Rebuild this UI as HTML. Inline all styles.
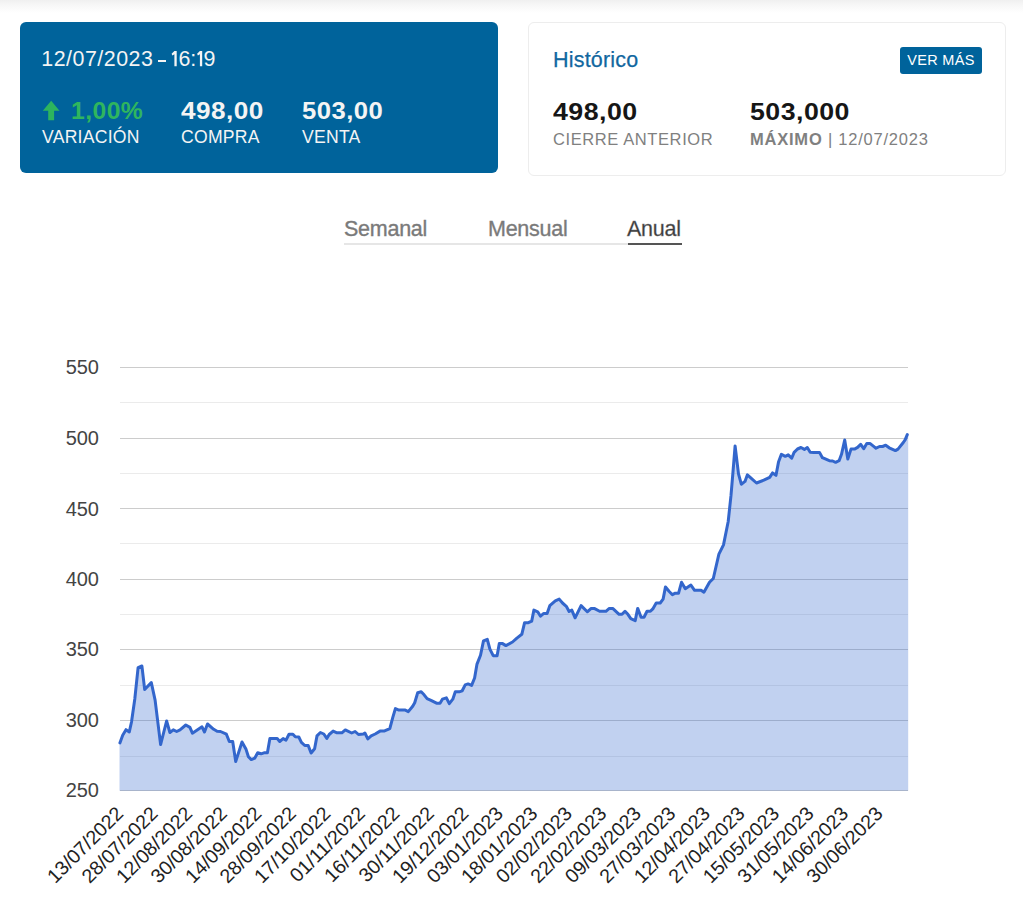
<!DOCTYPE html>
<html>
<head>
<meta charset="utf-8">
<style>
html, body { margin:0; padding:0; }
body { width:1023px; height:910px; position:relative; overflow:hidden; background:#ffffff; font-family:"Liberation Sans", sans-serif; }
.topshade { position:absolute; left:0; top:0; width:1023px; height:13px; background:linear-gradient(#f0f0f0, #f8f8f8 45%, #ffffff); }
.abs { position:absolute; white-space:nowrap; line-height:1; }
.card1 { position:absolute; left:20px; top:22px; width:478px; height:151px; background:#00639b; border-radius:6px; }
.card2 { position:absolute; box-sizing:border-box; left:528px; top:22px; width:478px; height:154px; border:1.5px solid #ededed; border-radius:6px; background:#fff; }
.w { color:#f4f4f4; }
.date { left:41.3px; top:49px; font-size:21.4px; letter-spacing:0.5px; }
.big { font-weight:bold; font-size:23px; letter-spacing:0.4px; transform-origin:0 0; }
.lbl { font-size:17.6px; letter-spacing:0.25px; }
.green { color:#2fb55e; }
.hist { left:553px; top:50px; font-size:21.5px; color:#11679f; letter-spacing:0.2px; -webkit-text-stroke:0.25px #11679f; }
.btn { position:absolute; left:900px; top:47px; width:82px; height:27px; background:#00639b; border-radius:3px; color:#fff; font-size:14.5px; letter-spacing:0.3px; line-height:26px; text-align:center; line-height:27px; }
.dark { color:#161616; }
.grey { color:#808080; font-size:16.5px; letter-spacing:0.6px; }
.tab { font-size:21.5px; color:#7a7a7a; top:219px; letter-spacing:-0.25px; -webkit-text-stroke:0.35px #7a7a7a; }
svg { position:absolute; left:0; top:0; }
</style>
</head>
<body>
<div class="topshade"></div>
<div class="card1"></div>
<div class="card2"></div>
<div class="abs w date">12/07/2023</div><div class="abs" style="left:158px; top:59.6px; width:7.5px; height:2.2px; background:#f4f4f4;"></div><svg width="1023" height="910" style="z-index:2"><path d="M174.4,51 L176.7,51 L176.7,66.2 L174.4,66.2 L174.4,54.2 L172.4,55.6 L171.6,53.8 Z" fill="#f4f4f4"/><path d="M199.9,51 L202.2,51 L202.2,66.2 L199.9,66.2 L199.9,54.2 L197.9,55.6 L197.1,53.8 Z" fill="#f4f4f4"/></svg><div class="abs w date" style="left:178.6px; letter-spacing:0;">6</div><div class="abs w date" style="left:190.3px; letter-spacing:0;">:</div><div class="abs w date" style="left:203.6px; letter-spacing:0;">9</div>
<svg width="1023" height="910" style="z-index:2">
<path d="M51.15,100.8 L59.5,110.8 L54.1,110.8 L54.1,120.2 L48.2,120.2 L48.2,110.8 L42.8,110.8 Z" fill="#2db45e"/>
</svg>
<div class="abs big green" style="left:71.4px; top:100px; z-index:3; transform:scaleX(1.075);">1,00%</div>
<div class="abs w lbl" style="left:42px; top:129px;">VARIACIÓN</div>
<div class="abs w big" style="left:181.2px; top:100px; transform:scaleX(1.136);">498,00</div>
<div class="abs w lbl" style="left:181px; top:129px;">COMPRA</div>
<div class="abs w big" style="left:302px; top:100px; transform:scaleX(1.115);">503,00</div>
<div class="abs w lbl" style="left:302px; top:129px;">VENTA</div>

<div class="abs hist">Histórico</div>
<div class="btn">VER MÁS</div>
<div class="abs big dark" style="left:552.5px; top:101px; transform:scaleX(1.164);">498,00</div>
<div class="abs grey" style="left:553px; top:131px;">CIERRE ANTERIOR</div>
<div class="abs big dark" style="left:750px; top:101px; transform:scaleX(1.162);">503,000</div>
<div class="abs grey" style="left:750px; top:131px; letter-spacing:0.78px;"><b style="font-weight:bold">MÁXIMO</b> | 12/07/2023</div>

<div class="abs tab" style="left:344px;">Semanal</div>
<div class="abs tab" style="left:488px;">Mensual</div>
<div class="abs tab" style="left:627px; color:#3a3a3a;">Anual</div>
<div class="abs" style="left:344px; top:243px; width:284px; height:2px; background:#e6e6e6;"></div>
<div class="abs" style="left:628px; top:243px; width:54px; height:2px; background:#555555;"></div>

<svg width="1023" height="910" style="z-index:1">
<g shape-rendering="crispEdges">
<line x1="119.5" y1="367.5" x2="908.2" y2="367.5" stroke="#cccccc" stroke-width="1"/>
<line x1="119.5" y1="438.3" x2="908.2" y2="438.3" stroke="#cccccc" stroke-width="1"/>
<line x1="119.5" y1="508.9" x2="908.2" y2="508.9" stroke="#cccccc" stroke-width="1"/>
<line x1="119.5" y1="579.6" x2="908.2" y2="579.6" stroke="#cccccc" stroke-width="1"/>
<line x1="119.5" y1="649.3" x2="908.2" y2="649.3" stroke="#cccccc" stroke-width="1"/>
<line x1="119.5" y1="720.2" x2="908.2" y2="720.2" stroke="#cccccc" stroke-width="1"/>
<line x1="119.5" y1="790.8" x2="908.2" y2="790.8" stroke="#cccccc" stroke-width="1"/>
<line x1="119.5" y1="402.3" x2="908.2" y2="402.3" stroke="#ebebeb" stroke-width="1"/>
<line x1="119.5" y1="473.1" x2="908.2" y2="473.1" stroke="#ebebeb" stroke-width="1"/>
<line x1="119.5" y1="543.9" x2="908.2" y2="543.9" stroke="#ebebeb" stroke-width="1"/>
<line x1="119.5" y1="614.4" x2="908.2" y2="614.4" stroke="#ebebeb" stroke-width="1"/>
<line x1="119.5" y1="685.3" x2="908.2" y2="685.3" stroke="#ebebeb" stroke-width="1"/>
<line x1="119.5" y1="756.4" x2="908.2" y2="756.4" stroke="#ebebeb" stroke-width="1"/>
</g>
<path d="M119.5,790.8 L119.5,742.9 L119.9,742.9 L122.7,735.2 L126,729.7 L129.3,731.9 L131.5,722 L134.8,699 L138.1,667.6 L141.9,666 L144.7,689.6 L151.3,682.5 L155.1,700.1 L160.6,744.6 L166.6,721 L169.9,732.5 L173.3,729.8 L176.7,731.5 L180,729.9 L185.8,725 L189.9,727.4 L192.4,733.2 L199.8,728.3 L202,726.8 L204.5,732 L207.5,724 L213.7,729.3 L217.1,731.3 L220.5,731.5 L226.4,734.2 L229.3,741.5 L232.7,741.5 L235.7,761.6 L242,742 L245.9,748.9 L248.4,756.7 L251.3,759.6 L254.7,758.2 L257.7,752.8 L261.1,753.8 L264,752.8 L267.4,752.8 L269.9,738.6 L277.2,738.6 L279.7,741.5 L283.1,738.6 L286,740.1 L289,734.2 L292.9,734.2 L295.3,736.7 L298.8,737 L301.4,742.3 L304.8,745.5 L308.2,745.5 L311.1,753 L314.6,748.7 L317,735.9 L320.4,732.5 L323.8,734 L326.8,738.4 L329.2,734.5 L333.1,731.1 L337,732.8 L341.9,732.8 L345.3,729.9 L351.7,733 L355.1,731.5 L358.5,734.5 L363.4,734 L364.9,733 L367.8,738.9 L371.2,735.9 L375.2,734 L380,731.1 L384,731.1 L389.8,728.6 L392.8,717.4 L395.4,708.6 L398.9,710.1 L405.3,710.1 L408.3,711.6 L412.7,706.2 L414.7,702.7 L417.7,692.8 L421.2,691.8 L424.1,694.8 L427.1,698.7 L431.5,700.7 L436.5,703.2 L440,703.2 L442.4,699.2 L446.4,697.8 L449.3,703.7 L452.8,699.2 L455.3,691.8 L459.2,691.8 L462.2,690.8 L465.2,684.9 L468.1,683.9 L471.6,685.4 L474.6,678 L477,664.1 L480.5,655.2 L483.5,640.9 L487.3,639.3 L489.9,649.1 L493.2,655.7 L497.1,655.7 L499.3,643.6 L502.6,643.6 L505.9,645.6 L512.5,642 L516.9,638.1 L521.8,634.3 L524.6,622.7 L528.4,622.7 L531.7,621.1 L533.9,610.1 L537.7,611.8 L540.5,616.2 L543.8,613.4 L547.1,613.4 L549.8,605.7 L555.3,600.8 L559.2,599.1 L562.5,603 L566.3,606.3 L569.1,611.5 L571.8,610.1 L575.1,617.8 L581.1,605.6 L587.3,611.8 L591.2,608.4 L594.2,608.4 L599.6,611.3 L605.9,611.3 L609.3,608.4 L612.7,608.4 L619.1,614.3 L622,614.3 L625,611.3 L627.9,614.3 L630.8,618.7 L635.2,620.6 L637.7,608.4 L641.1,617.2 L644,617.2 L647,611.3 L650.4,611.3 L652.8,608.9 L656.2,603 L660.2,603 L663.1,599.1 L665.5,586.9 L669,591.3 L672.4,594.7 L675.3,593.2 L678.5,593.3 L681.5,582.3 L685.3,588.8 L690.9,585.1 L694.6,590.3 L701.1,590.3 L703.9,592.2 L709.5,582.3 L713.3,578.5 L718.9,554.2 L723.5,544.9 L728.2,521.5 L731,495.4 L732.9,473 L735.1,445.9 L738.5,473.9 L741.3,484.2 L745,481.4 L747.4,474.8 L751.6,478.6 L756.5,483 L763.8,480.2 L769.7,477.3 L772.6,472.9 L776,475.3 L778.5,462.1 L781.4,454.3 L785.3,456.3 L788.2,454.8 L791.7,458.2 L794.1,452.4 L797.5,449 L801,447.5 L804.4,449.4 L807.3,447.5 L810.2,452.2 L813.7,452.4 L819.5,452.4 L822.4,457.7 L829.3,460.7 L832.7,461 L835.6,462.3 L839.1,460.7 L841.5,454.3 L844.7,440 L847.8,459 L851,449.1 L854.5,449.1 L857.6,447.4 L860.7,444.3 L863.7,448.7 L866.8,443.4 L869.9,443.4 L874.3,446.9 L876,448.2 L879.6,446.5 L882.6,446.5 L885.7,445.2 L889.2,447.8 L895.4,450.6 L898,449.1 L903.3,442.5 L905.1,439.9 L907.3,434.6 L908.2,434.6 L908.2,790.8 Z" fill="#3366cc" fill-opacity="0.3" stroke="none"/>
<path d="M119.9,742.9 L122.7,735.2 L126,729.7 L129.3,731.9 L131.5,722 L134.8,699 L138.1,667.6 L141.9,666 L144.7,689.6 L151.3,682.5 L155.1,700.1 L160.6,744.6 L166.6,721 L169.9,732.5 L173.3,729.8 L176.7,731.5 L180,729.9 L185.8,725 L189.9,727.4 L192.4,733.2 L199.8,728.3 L202,726.8 L204.5,732 L207.5,724 L213.7,729.3 L217.1,731.3 L220.5,731.5 L226.4,734.2 L229.3,741.5 L232.7,741.5 L235.7,761.6 L242,742 L245.9,748.9 L248.4,756.7 L251.3,759.6 L254.7,758.2 L257.7,752.8 L261.1,753.8 L264,752.8 L267.4,752.8 L269.9,738.6 L277.2,738.6 L279.7,741.5 L283.1,738.6 L286,740.1 L289,734.2 L292.9,734.2 L295.3,736.7 L298.8,737 L301.4,742.3 L304.8,745.5 L308.2,745.5 L311.1,753 L314.6,748.7 L317,735.9 L320.4,732.5 L323.8,734 L326.8,738.4 L329.2,734.5 L333.1,731.1 L337,732.8 L341.9,732.8 L345.3,729.9 L351.7,733 L355.1,731.5 L358.5,734.5 L363.4,734 L364.9,733 L367.8,738.9 L371.2,735.9 L375.2,734 L380,731.1 L384,731.1 L389.8,728.6 L392.8,717.4 L395.4,708.6 L398.9,710.1 L405.3,710.1 L408.3,711.6 L412.7,706.2 L414.7,702.7 L417.7,692.8 L421.2,691.8 L424.1,694.8 L427.1,698.7 L431.5,700.7 L436.5,703.2 L440,703.2 L442.4,699.2 L446.4,697.8 L449.3,703.7 L452.8,699.2 L455.3,691.8 L459.2,691.8 L462.2,690.8 L465.2,684.9 L468.1,683.9 L471.6,685.4 L474.6,678 L477,664.1 L480.5,655.2 L483.5,640.9 L487.3,639.3 L489.9,649.1 L493.2,655.7 L497.1,655.7 L499.3,643.6 L502.6,643.6 L505.9,645.6 L512.5,642 L516.9,638.1 L521.8,634.3 L524.6,622.7 L528.4,622.7 L531.7,621.1 L533.9,610.1 L537.7,611.8 L540.5,616.2 L543.8,613.4 L547.1,613.4 L549.8,605.7 L555.3,600.8 L559.2,599.1 L562.5,603 L566.3,606.3 L569.1,611.5 L571.8,610.1 L575.1,617.8 L581.1,605.6 L587.3,611.8 L591.2,608.4 L594.2,608.4 L599.6,611.3 L605.9,611.3 L609.3,608.4 L612.7,608.4 L619.1,614.3 L622,614.3 L625,611.3 L627.9,614.3 L630.8,618.7 L635.2,620.6 L637.7,608.4 L641.1,617.2 L644,617.2 L647,611.3 L650.4,611.3 L652.8,608.9 L656.2,603 L660.2,603 L663.1,599.1 L665.5,586.9 L669,591.3 L672.4,594.7 L675.3,593.2 L678.5,593.3 L681.5,582.3 L685.3,588.8 L690.9,585.1 L694.6,590.3 L701.1,590.3 L703.9,592.2 L709.5,582.3 L713.3,578.5 L718.9,554.2 L723.5,544.9 L728.2,521.5 L731,495.4 L732.9,473 L735.1,445.9 L738.5,473.9 L741.3,484.2 L745,481.4 L747.4,474.8 L751.6,478.6 L756.5,483 L763.8,480.2 L769.7,477.3 L772.6,472.9 L776,475.3 L778.5,462.1 L781.4,454.3 L785.3,456.3 L788.2,454.8 L791.7,458.2 L794.1,452.4 L797.5,449 L801,447.5 L804.4,449.4 L807.3,447.5 L810.2,452.2 L813.7,452.4 L819.5,452.4 L822.4,457.7 L829.3,460.7 L832.7,461 L835.6,462.3 L839.1,460.7 L841.5,454.3 L844.7,440 L847.8,459 L851,449.1 L854.5,449.1 L857.6,447.4 L860.7,444.3 L863.7,448.7 L866.8,443.4 L869.9,443.4 L874.3,446.9 L876,448.2 L879.6,446.5 L882.6,446.5 L885.7,445.2 L889.2,447.8 L895.4,450.6 L898,449.1 L903.3,442.5 L905.1,439.9 L907.3,434.6" fill="none" stroke="#3366cc" stroke-width="3" stroke-linejoin="round" stroke-linecap="round"/>
<g font-family="Liberation Sans" font-size="20" fill="#444444">
<text x="99" y="374.1" text-anchor="end">550</text>
<text x="99" y="444.9" text-anchor="end">500</text>
<text x="99" y="515.5" text-anchor="end">450</text>
<text x="99" y="586.2" text-anchor="end">400</text>
<text x="99" y="655.9" text-anchor="end">350</text>
<text x="99" y="726.8" text-anchor="end">300</text>
<text x="99" y="797.4" text-anchor="end">250</text>
</g>
<g font-family="Liberation Sans" font-size="19.6" fill="#222222">
<text x="124.5" y="814.8" text-anchor="end" transform="rotate(-45 124.5 814.8)">13/07/2022</text>
<text x="159" y="814.8" text-anchor="end" transform="rotate(-45 159 814.8)">28/07/2022</text>
<text x="193.5" y="814.8" text-anchor="end" transform="rotate(-45 193.5 814.8)">12/08/2022</text>
<text x="228.1" y="814.8" text-anchor="end" transform="rotate(-45 228.1 814.8)">30/08/2022</text>
<text x="262.6" y="814.8" text-anchor="end" transform="rotate(-45 262.6 814.8)">14/09/2022</text>
<text x="297.1" y="814.8" text-anchor="end" transform="rotate(-45 297.1 814.8)">28/09/2022</text>
<text x="331.6" y="814.8" text-anchor="end" transform="rotate(-45 331.6 814.8)">17/10/2022</text>
<text x="366.1" y="814.8" text-anchor="end" transform="rotate(-45 366.1 814.8)">01/11/2022</text>
<text x="400.7" y="814.8" text-anchor="end" transform="rotate(-45 400.7 814.8)">16/11/2022</text>
<text x="435.2" y="814.8" text-anchor="end" transform="rotate(-45 435.2 814.8)">30/11/2022</text>
<text x="469.7" y="814.8" text-anchor="end" transform="rotate(-45 469.7 814.8)">19/12/2022</text>
<text x="504.2" y="814.8" text-anchor="end" transform="rotate(-45 504.2 814.8)">03/01/2023</text>
<text x="538.7" y="814.8" text-anchor="end" transform="rotate(-45 538.7 814.8)">18/01/2023</text>
<text x="573.3" y="814.8" text-anchor="end" transform="rotate(-45 573.3 814.8)">02/02/2023</text>
<text x="607.8" y="814.8" text-anchor="end" transform="rotate(-45 607.8 814.8)">22/02/2023</text>
<text x="642.3" y="814.8" text-anchor="end" transform="rotate(-45 642.3 814.8)">09/03/2023</text>
<text x="676.8" y="814.8" text-anchor="end" transform="rotate(-45 676.8 814.8)">27/03/2023</text>
<text x="711.3" y="814.8" text-anchor="end" transform="rotate(-45 711.3 814.8)">12/04/2023</text>
<text x="745.9" y="814.8" text-anchor="end" transform="rotate(-45 745.9 814.8)">27/04/2023</text>
<text x="780.4" y="814.8" text-anchor="end" transform="rotate(-45 780.4 814.8)">15/05/2023</text>
<text x="814.9" y="814.8" text-anchor="end" transform="rotate(-45 814.9 814.8)">31/05/2023</text>
<text x="849.4" y="814.8" text-anchor="end" transform="rotate(-45 849.4 814.8)">14/06/2023</text>
<text x="883.9" y="814.8" text-anchor="end" transform="rotate(-45 883.9 814.8)">30/06/2023</text>
</g>
</svg>
</body>
</html>
